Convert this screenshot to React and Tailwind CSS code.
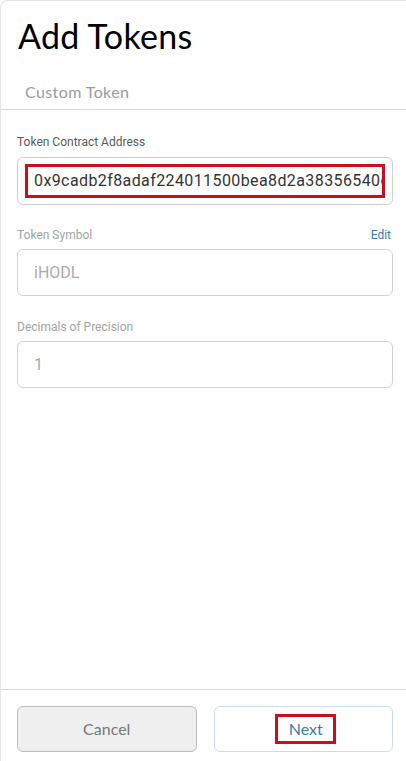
export default function App() {
  return (
    <div className="h-[761px] w-[406px] bg-white flex flex-col border-l border-t border-[#e4e4e4] rounded-tl-lg overflow-hidden">
      {/* Header */}
      <div className="px-[17px] pt-[15px] h-[66px]">
        <h1 className="text-[34px] leading-[40px] tracking-[0.3px] text-black" style={{ fontFamily: 'Lato, sans-serif' }}>
          Add Tokens
        </h1>
      </div>
      <div className="h-[43px] border-b border-[#d9d9d9] px-[24px] pt-[13px]">
        <span className="text-[16px] leading-[20px] tracking-[0.4px] text-[#9b9b9b]" style={{ fontFamily: 'Lato, sans-serif' }}>
          Custom Token
        </span>
      </div>

      {/* Form */}
      <div className="pl-[16px] pr-[13px] pt-[24px] flex flex-col" style={{ fontFamily: 'Roboto, sans-serif' }}>
        <label className="text-[12px] leading-[16px] text-[#5a5a5a]">Token Contract Address</label>
        <div className="mt-[7px] h-[48px] border border-[#cfcfcf] rounded-md px-[7px] flex items-center">
          <div className="h-[34px] w-full border-[3px] border-[#c8101c] flex items-center pl-[6px] overflow-hidden">
            <span className="text-[16px] text-[#333] whitespace-nowrap tracking-[0.4px]">0x9cadb2f8adaf224011500bea8d2a38356540c</span>
          </div>
        </div>

        <div className="mt-[22px] flex justify-between items-center">
          <label className="text-[12px] leading-[16px] text-[#a3a3a3]">Token Symbol</label>
          <span className="text-[12px] leading-[16px] text-[#3b78b0] pr-[2px]">Edit</span>
        </div>
        <div className="mt-[6px] h-[47px] border border-[#d2d2d2] rounded-md px-[16px] flex items-center">
          <span className="text-[16px] text-[#aaaaaa]">iHODL</span>
        </div>

        <label className="mt-[23px] text-[12px] leading-[16px] text-[#a3a3a3]">Decimals of Precision</label>
        <div className="mt-[6px] h-[47px] border border-[#d2d2d2] rounded-md px-[16px] flex items-center">
          <span className="text-[16px] text-[#aaaaaa]">1</span>
        </div>
      </div>

      <div className="flex-1" />

      {/* Footer */}
      <div className="h-[72px] border-t border-[#dadada] pl-[16px] pr-[13px] pt-[16px] flex gap-[17px]" style={{ fontFamily: 'Lato, sans-serif' }}>
        <button className="flex-1 h-[46px] rounded-md bg-[#efefef] border border-[#bdbdbd] text-[16px] text-[#777]">
          Cancel
        </button>
        <button className="flex-1 h-[46px] rounded-md bg-white border border-[#c6dcec] flex items-center justify-center">
          <span className="ml-[5px] w-[61px] h-[30px] border-[3px] border-[#c8101c] flex items-center justify-center text-[16px] text-[#3b78b0]">
            Next
          </span>
        </button>
      </div>
    </div>
  )
}
